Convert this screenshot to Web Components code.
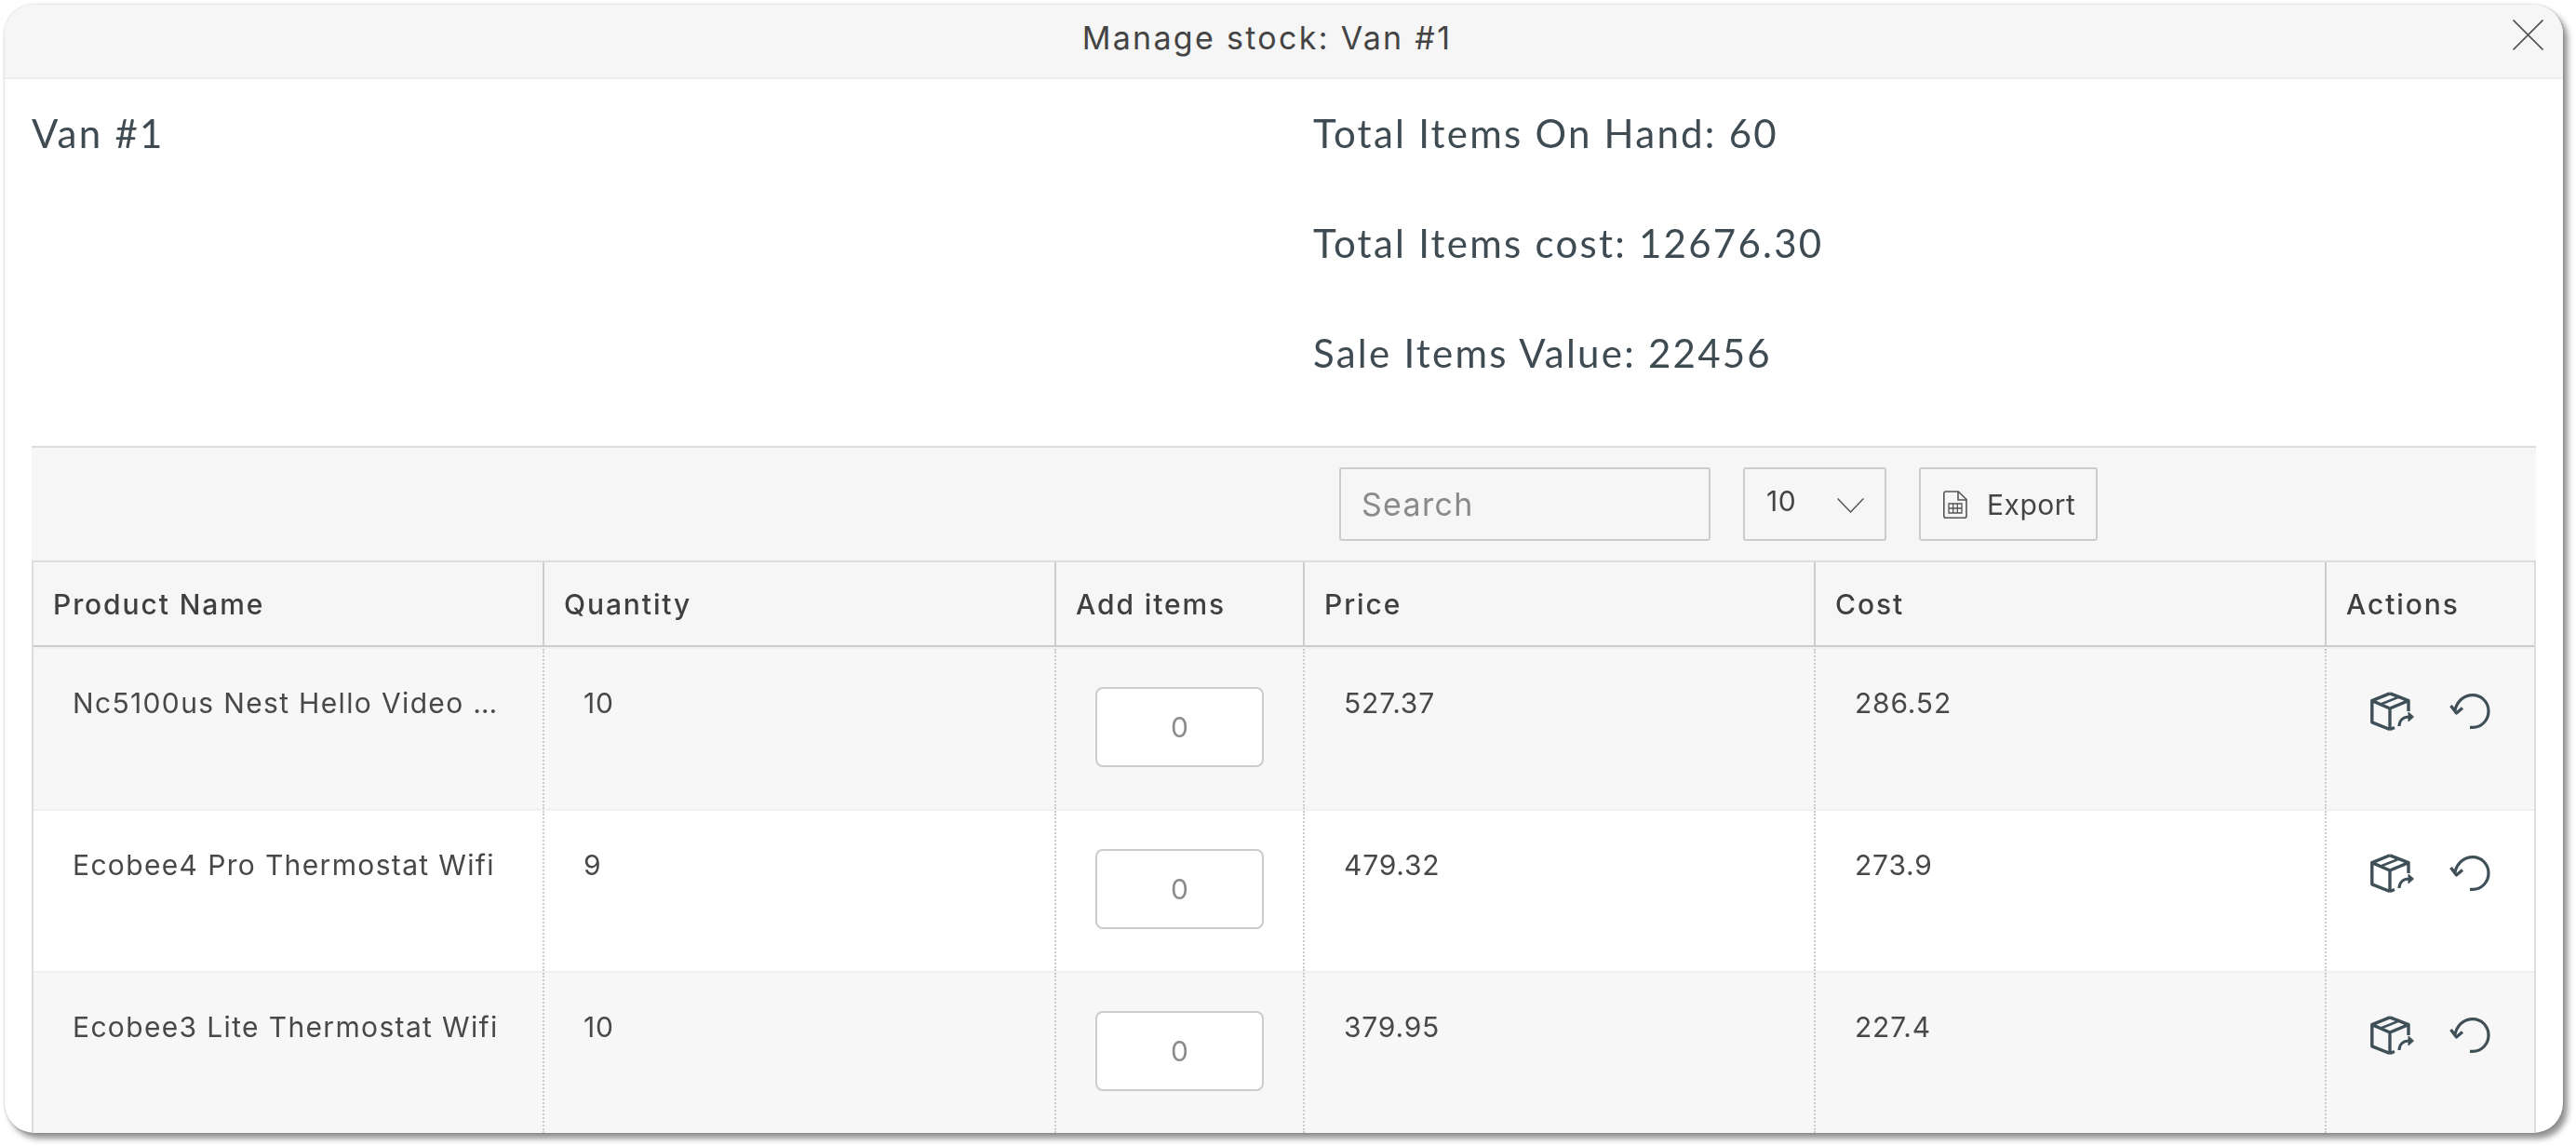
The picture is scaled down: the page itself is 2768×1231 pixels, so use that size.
<!DOCTYPE html>
<html><head><meta charset="utf-8"><title>Manage stock</title>
<style>html,body{margin:0;padding:0;background:#fff;height:100%;overflow:hidden}
stock-modal{filter:drop-shadow(5px 6px 3px rgba(0,0,0,.42))}</style></head>
<body>
<stock-modal>
  <stock-header slot="header">Manage stock: Van #1</stock-header>
  <stock-summary slot="body" name="Van #1"></stock-summary>
  <stock-toolbar slot="body"></stock-toolbar>
  <stock-table slot="body">
    <stock-row name="Nc5100us Nest Hello Video …" qty="10" price="527.37" cost="286.52"></stock-row>
    <stock-row name="Ecobee4 Pro Thermostat Wifi" qty="9" price="479.32" cost="273.9"></stock-row>
    <stock-row name="Ecobee3 Lite Thermostat Wifi" qty="10" price="379.95" cost="227.4"></stock-row>
  </stock-table>
</stock-modal>
<script>
const POP = '"Inter","Liberation Sans",sans-serif';
const NUN = 'Lato,"Noto Sans",sans-serif';
function def(name, html){
  customElements.define(name, class extends HTMLElement{
    connectedCallback(){
      if(this.shadowRoot) return;
      const s=this.attachShadow({mode:'open'});
      s.innerHTML = typeof html==='function'?html(this):html;
    }
  });
}
def('stock-modal',`<style>
:host{display:flex;flex-direction:column;box-sizing:border-box;margin:5px 0 0 5px;width:2749px;height:1212px;background:#fff;border-radius:32px;overflow:hidden;box-shadow:0 0 3px rgba(0,0,0,.25)}
.b{flex:1;min-height:0;overflow:hidden;padding:0 29px}
</style><slot name="header"></slot><div class="b"><slot name="body"></slot></div>`);
def('stock-header',`<style>
:host{display:flex;align-items:center;box-sizing:border-box;height:80px;background:#f6f6f6;border-bottom:2px solid #eee;padding-left:18px;padding-right:21px;font:400 34px ${POP};letter-spacing:2.3px;color:#444}
.t{flex:1;text-align:center;margin-top:-7px}
svg{display:block;width:33px;height:33px;margin-top:-13px}
</style><div class="t"><slot></slot></div><svg viewBox="0 0 33 33" fill="none" stroke="#555" stroke-width="1.7"><path d="M.5.5l32 32M32.5.5l-32 32"/></svg>`);
def('stock-summary',h=>`<style>
:host{display:grid;grid-template-columns:1376px 1fr;box-sizing:border-box;padding:33px 0 75px;border-bottom:2px solid #ddd;font:400 42px/50px ${NUN};letter-spacing:2.25px;color:#3f4b53}
.r{display:flex;flex-direction:column;gap:68px;padding-left:1px}
</style><div>${h.getAttribute('name')}</div><div class="r"><div>Total Items On Hand: 60</div><div>Total Items cost: 12676.30</div><div>Sale Items Value: 22456</div></div>`);
def('stock-toolbar',`<style>
:host{display:flex;align-items:stretch;gap:35px;box-sizing:border-box;height:121px;background:#f6f6f6;padding:21px 0 21px 1405px;font:400 30px ${POP};color:#444}
.box{box-sizing:border-box;height:79px;border:2px solid #ccc;border-radius:3px;display:flex;align-items:center}
.s{width:399px;padding-left:22px;font-size:34px;color:#8a8a8a;letter-spacing:1.3px}
.n{width:154px;padding-left:23px;position:relative;letter-spacing:.6px}
.n span{margin-top:-8px}
.n svg{position:absolute;left:99px;top:31px;width:29px;height:16px}
.e{width:192px;padding-left:24px;gap:21px;letter-spacing:.5px}
.e svg{width:26px;height:30px;flex:none}
</style><div class="box s">Search</div><div class="box n"><span>10</span><svg viewBox="0 0 29 16" fill="none" stroke="#555" stroke-width="1.5"><path d="M.6.6L14.5 15 28.4.6"/></svg></div><div class="box e"><svg viewBox="0 0 26 30" fill="none" stroke="#555" stroke-width="1.6"><path d="M2.8 1h13.500L25 9.500v17.700a2 2 0 0 1-2 2H2.800a2 2 0 0 1-2-2V3a2 2 0 0 1 2-2z"/><path d="M16 1v9h9"/><path d="M6 14h14v10H6zM6 19h14M10.700 14v10M15.300 14v10" stroke-width="1.300"/></svg><span>Export</span></div>`);
const COLS='547px 550px 267px 549px 549px 225px';
def('stock-table',`<style>
:host{display:block;box-sizing:border-box;width:2691px;border:solid #ddd;border-width:0 2px;font:400 30px ${POP};color:#444}
.h{display:grid;grid-template-columns:${COLS};height:93px;box-sizing:border-box;background:#f6f6f6;border-top:2px solid #ddd;border-bottom:2px solid #ccc;font-weight:500;letter-spacing:1.9px;color:#3f3f3f}
.h div{display:flex;align-items:center;padding-left:21px;border-left:2px solid #ccc}
.h div:first-child{border-left:0;padding-left:21px}
</style><div class="h"><div>Product Name</div><div>Quantity</div><div>Add items</div><div>Price</div><div>Cost</div><div>Actions</div></div><slot></slot>`);
def('stock-row',h=>`<style>
:host{display:grid;grid-template-columns:${COLS};height:174px;box-sizing:border-box;border-top:2px solid #f0f0f0}
:host(:nth-child(odd)){background:#f7f7f7}
:host(:nth-child(even)){background:#fff}
.c{box-sizing:border-box;padding:43px 0 0 42px;border-left:2px dotted #ccc;line-height:30px;letter-spacing:.8px;color:#484848;min-width:0}
.first{border-left:0;padding-left:42px;letter-spacing:1.35px}
.name{white-space:nowrap}
.i{box-sizing:border-box;width:181px;height:86px;background:#fff;border:2px solid #ccc;border-radius:8px;display:flex;align-items:center;justify-content:center;color:#8b8b8b;font-size:30px;letter-spacing:0;margin-top:-2px}
.a{display:flex;align-items:flex-start;gap:38px;padding:0 0 0 47px}
.a svg{display:block;flex:none}
.box{width:47px;height:42px;margin-top:46px}
.undo{width:44px;height:38px;margin-top:48px}
</style><div class="c first"><div class="name">${h.getAttribute('name')}</div></div><div class="c">${h.getAttribute('qty')}</div><div class="c"><div class="i">0</div></div><div class="c">${h.getAttribute('price')}</div><div class="c">${h.getAttribute('cost')}</div><div class="c a"><svg class="box" viewBox="0 0 47 42" fill="none" stroke="#3f4f58" stroke-width="3.400" stroke-linejoin="round"><path d="M21 1.800L41 9.600V21M21 40.500 1.800 32.800V9.600L21 1.800M1.800 9.600 21 18 41 9.600M21 18V40.500M21 40.500l5-2"/><path d="M10.500 13.800 31 5.600" stroke-width="2.600"/><path d="M31 37c0-6 4-10 11-10" stroke-width="3"/><path d="M41 22l5.500 5-5.500 5z" fill="#3f4f58" stroke-width="1"/></svg><svg class="undo" viewBox="0 0 44 38" fill="none" stroke="#3f4f58" stroke-width="3.200"><path d="M6 18C8 8 16 1.700 25 1.700c9.600 0 17 7.700 17 17.300s-7.400 17.300-17 17.300h-3"/><path d="M1.500 13 7.500 21 14 15.500" stroke-linejoin="round"/></svg></div>`);
</script>
</body></html>
